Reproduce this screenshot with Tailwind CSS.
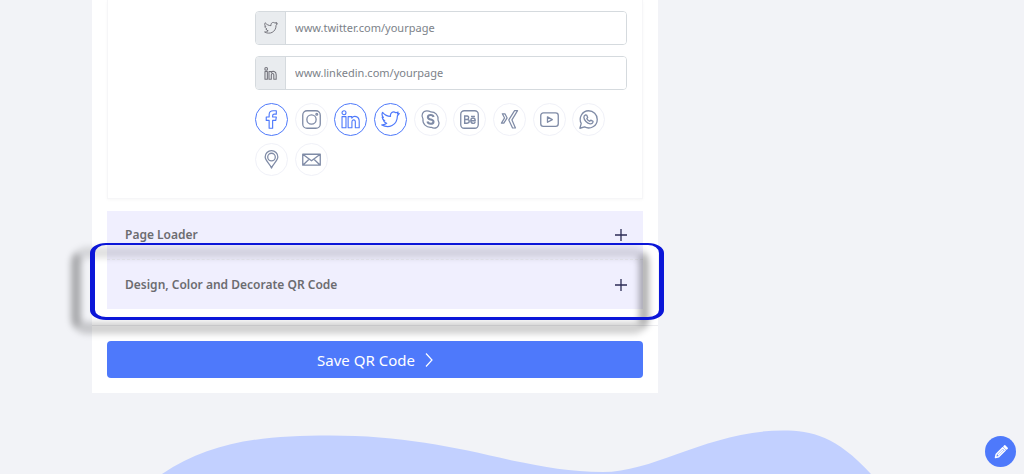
<!DOCTYPE html>
<html lang="en">
<head>
<meta charset="utf-8">
<meta name="viewport" content="width=device-width, initial-scale=1">
<title>QR Code</title>
<script src="https://cdn.jsdelivr.net/npm/@tailwindcss/browser@4"></script>
</head>
<body class="bg-white font-['Noto_Sans','Open_Sans',sans-serif] text-xs text-[#6c6c70]">
<div class="bg-[#f2f3f7]">
  <main class="ml-[92px] mr-[366px] bg-white">
    <form>
      <div class="px-[15px] pb-4">
        <section class="border border-t-0 border-[#f6f6f8] pt-[11px] pb-[22px] pl-[147px] pr-[15px] shadow-[0_1px_3px_rgba(0,0,0,0.03)]">
          <div class="flex flex-col gap-[11px] text-[11px]">
            <div class="flex h-[34px] overflow-hidden rounded border border-[#d5dade]">
              <label for="twitter" aria-label="Twitter" class="flex w-[30px] shrink-0 items-center justify-center border-r border-[#d5dade] bg-[#e9ecef] text-[#74747c]">
                <svg class="size-3.5" viewBox="0 0 24 24" fill="none" stroke="currentColor" stroke-width="1.700" stroke-linejoin="round"><path d="M23 4.500l-2.300.5.900-2.500-2.900 1C15 .8 11.300 3.600 12 8 8 8 4.500 6 2 3c-1.300 2.500-.8 4.500 1 6.300L1.500 9c.2 2 1.300 3.600 3.200 4.500l-1.400.2c.7 1.700 2 2.700 3.900 3.100C5.500 18.300 3.500 19 1 18.800c8.500 5 19.500.7 19.700-11.300z"/></svg>
              </label>
              <input id="twitter" type="text" placeholder="www.twitter.com/yourpage" class="min-w-0 flex-1 bg-white px-[9px] outline-none placeholder:text-[#7c8289]">
            </div>
            <div class="flex h-[34px] overflow-hidden rounded border border-[#d5dade]">
              <label for="linkedin" aria-label="LinkedIn" class="flex w-[30px] shrink-0 items-center justify-center border-r border-[#d5dade] bg-[#e9ecef] text-[#74747c]">
                <svg class="size-[13px]" viewBox="0 0 24 24" fill="none" stroke="currentColor" stroke-width="2" stroke-linejoin="round"><circle cx="4" cy="3.500" r="2.500"/><path d="M1.800 8.300h4.400v14.200H1.800zM9.200 8.300h4.200v1.900c2.400-3.500 9.100-2.700 9.100 4.100v8.200h-4.400v-7.600c0-3.800-4.600-3.600-4.600 0v7.600H9.200z"/></svg>
              </label>
              <input id="linkedin" type="text" placeholder="www.linkedin.com/yourpage" class="min-w-0 flex-1 bg-white px-[9px] outline-none placeholder:text-[#7c8289]">
            </div>
          </div>

          <div class="mt-[13px] grid max-w-[357px] grid-cols-9 gap-y-[7px] text-[#7f8ba6]">
            <button type="button" aria-label="Facebook" class="flex size-[33px] items-center justify-center rounded-full border border-[#4e79fb] text-[#4e79fb]">
              <svg class="size-[21px]" viewBox="0 0 24 24" fill="none" stroke="currentColor" stroke-width="1.300" stroke-linejoin="round"><path d="M9.300 22v-9H6V9.200h3.300V6.500C9.300 3.400 11.100 2 14 2h3.500v3.900h-2.300c-1.400 0-1.900.6-1.900 1.700v1.600h4.200l-.6 3.800h-3.600v9z"/></svg>
            </button>
            <button type="button" aria-label="Instagram" class="flex size-[33px] items-center justify-center rounded-full border border-[#f0f1f8]">
              <svg class="size-[21px]" viewBox="0 0 24 24" fill="none" stroke="currentColor" stroke-width="1.500"><rect x="2" y="2" width="20" height="20" rx="5"/><circle cx="12" cy="12" r="5.300"/><circle cx="18" cy="6" r="1"/></svg>
            </button>
            <button type="button" aria-label="LinkedIn" class="flex size-[33px] items-center justify-center rounded-full border border-[#4e79fb] text-[#4e79fb]">
              <svg class="size-[19px]" viewBox="0 0 24 24" fill="none" stroke="currentColor" stroke-width="1.400" stroke-linejoin="round"><circle cx="3.800" cy="3.500" r="2.500"/><path d="M1.300 8.300h5v14.200h-5zM9 8.300h4.600v1.900c2.400-3.500 9.400-2.700 9.400 4.100v8.200h-4.900v-7.600c0-3.300-4.300-3.100-4.300 0v7.600H9z"/></svg>
            </button>
            <button type="button" aria-label="Twitter" class="flex size-[33px] items-center justify-center rounded-full border border-[#4e79fb] text-[#4e79fb]">
              <svg class="size-[19px]" viewBox="0 0 24 24" fill="none" stroke="currentColor" stroke-width="1.500" stroke-linejoin="round"><path d="M23 4.500l-2.300.5.900-2.500-2.900 1C15 .8 11.300 3.600 12 8 8 8 4.500 6 2 3c-1.300 2.500-.8 4.500 1 6.300L1.500 9c.2 2 1.300 3.600 3.200 4.500l-1.400.2c.7 1.700 2 2.700 3.900 3.100C5.500 18.300 3.500 19 1 18.800c8.500 5 19.500.7 19.700-11.300z"/></svg>
            </button>
            <button type="button" aria-label="Skype" class="flex size-[33px] items-center justify-center rounded-full border border-[#f0f1f8]">
              <svg class="size-[21px]" viewBox="0 0 24 24" fill="none" stroke="currentColor" stroke-width="1.400" stroke-linejoin="round"><path d="M12 3.200c5.500-.2 9.400 4 8.600 9.500 2.500 3.900.4 9.200-4.500 9.200-1.200 0-2.200-.4-3.100-1C7.200 21.400 2.600 17 3.400 11.200.9 7.300 3 2.100 7.900 2.100c1.600 0 3 .4 4.100 1.100z"/><path d="M15.500 9.200C15 7.300 13.800 6.800 12 6.900c-3.600.2-4 3.600-.8 4.700 2.700.9 4.600 1 4.200 3.200-.5 2.900-6 2.900-6.900-.5" stroke-width="2.400"/></svg>
            </button>
            <button type="button" aria-label="Behance" class="flex size-[33px] items-center justify-center rounded-full border border-[#f0f1f8]">
              <svg class="size-[21px]" viewBox="0 0 24 24" fill="none" stroke="currentColor" stroke-width="1.500"><rect x="2" y="2" width="20" height="20" rx="4"/><path d="M6.500 8v8.200h2.800c3.200 0 3.100-4.200.2-4.200H6.500h2.800c2.300 0 2.300-4 0-4zM13.500 13.400h5c0-4.200-5-4.200-5 0 0 3.700 4.200 3.700 5 1.400M13.700 8.400h4.500" stroke-width="1.600"/></svg>
            </button>
            <button type="button" aria-label="Xing" class="flex size-[33px] items-center justify-center rounded-full border border-[#f0f1f8]">
              <svg class="size-[21px]" viewBox="0 0 24 24" fill="none" stroke="currentColor" stroke-width="1.400" stroke-linejoin="round"><path d="M3.800 5.500h3l2.500 4.700-3.800 6H2.800l3.600-6zM17.800 1.800h3.400L14.800 12.500l4 9.200h-3.300l-4.300-9.200z"/></svg>
            </button>
            <button type="button" aria-label="YouTube" class="flex size-[33px] items-center justify-center rounded-full border border-[#f0f1f8]">
              <svg class="size-[21px]" viewBox="0 0 24 24" fill="none" stroke="currentColor" stroke-width="1.500" stroke-linejoin="round"><rect x="2" y="4.500" width="20" height="15.400" rx="3"/><path d="M9.700 9v6.200l5.500-3.100z"/></svg>
            </button>
            <button type="button" aria-label="WhatsApp" class="flex size-[33px] items-center justify-center rounded-full border border-[#f0f1f8]">
              <svg class="size-[21px]" viewBox="0 0 24 24" fill="none" stroke="currentColor" stroke-width="1.500" stroke-linejoin="round"><path d="M2.200 22l1.500-5.500C.2 10 5 2 12 2c5.500 0 10 4.400 10 9.900 0 7.400-8 12-14.500 8.600z"/><path d="M8.500 6.800l1.400.1 1.200 2.700-1 1.500c.8 1.500 1.900 2.400 3.200 2.900l1.300-1.200 2.600 1.300c.2 1.800-1.500 3-3.300 2.800-3.500-.5-7-4.100-7.200-7.300 0-1.200.6-2.300 1.800-2.800z"/></svg>
            </button>
            <button type="button" aria-label="Location" class="flex size-[33px] items-center justify-center rounded-full border border-[#f0f1f8]">
              <svg class="size-[19px]" viewBox="0 0 24 24" fill="none" stroke="currentColor" stroke-width="1.600" stroke-linejoin="round"><path d="M12 22.800C10.500 18 4 13.500 4 8.900a8 8 0 0 1 16 0c0 4.600-6.500 9.100-8 13.900z"/><circle cx="12" cy="8.900" r="4.800"/></svg>
            </button>
            <button type="button" aria-label="Email" class="flex size-[33px] items-center justify-center rounded-full border border-[#f0f1f8]">
              <svg class="size-[21px]" viewBox="0 0 24 24" fill="none" stroke="currentColor" stroke-width="1.500" stroke-linejoin="round"><path d="M2 6h20v12.500H2zM2 6l10 7.500L22 6M2 18.500l7.500-7M22 18.500l-7.500-7"/></svg>
            </button>
          </div>
        </section>

        <button type="button" class="mt-3 flex h-[49px] w-full items-center justify-between border-b border-dashed border-[#e8e8f0] bg-[#f0effe] pl-[18px] pr-4 text-left font-semibold">
          <span>Page Loader</span>
          <svg class="size-3" viewBox="0 0 12 12" fill="none" stroke="#2b2b55" stroke-width="1.300"><path d="M6 0v12M0 6h12"/></svg>
        </button>
        <div class="relative">
          <button type="button" class="flex h-[49px] w-full items-center justify-between bg-[#f0effe] pl-[18px] pr-4 text-left font-semibold">
            <span>Design, Color and Decorate QR Code</span>
            <svg class="size-3" viewBox="0 0 12 12" fill="none" stroke="#2b2b55" stroke-width="1.300"><path d="M6 0v12M0 6h12"/></svg>
          </button>
          <!-- Highlight frame and its cast shadow -->
          <div class="pointer-events-none absolute -top-[13px] -bottom-[25px] -left-9 -right-1.5 rounded-[16px] border-x-[10px] border-t-[11px] border-b-[12px] border-x-black/30 border-t-black/12 border-b-black/18 blur-[3px]"></div>
          <div class="pointer-events-none absolute -top-[17px] -bottom-[11px] -left-[17px] -right-[21px] rounded-[16px/10px] border-x-[5px] border-t-2 border-b-3 border-[#0b16d8]"></div>
        </div>
      </div>
      <div class="border-t border-[#ececef] px-[15px] pt-[15px] pb-[15px]">
        <button type="submit" class="flex h-[37px] w-full items-center justify-center gap-2.5 rounded bg-[#4e79fb] text-[15px] text-white">
          <span>Save QR Code</span>
          <svg class="h-3.5 w-2" viewBox="0 0 8 14" fill="none" stroke="currentColor" stroke-width="1.200"><path d="M1 .5l6 6.500-6 6.500"/></svg>
        </button>
      </div>
    </form>
  </main>
  <svg class="mt-[37px] block h-11 w-full" viewBox="0 0 1024 44" preserveAspectRatio="none" fill="#c2d0ff"><path d="M162 44C210 12 260 5.500 330 5.500C400 5.500 455 17 512 30.500C545 37 570 42 603 42C655 42 710 .5 783 .5C812 .5 836 6 871 44z"/></svg>
</div>
<button type="button" aria-label="Edit" class="fixed right-2 bottom-[9px] flex size-[31px] items-center justify-center rounded-full bg-[#4e79fb] text-white">
  <svg class="size-3.5" viewBox="0 0 14 14" fill="none" stroke="currentColor" stroke-width="1.500" stroke-linejoin="round"><path d="M1.500 12.500l.7-3.200 6.500-6.500 2.500 2.500-6.500 6.500zM3.800 10.200l5.400-5.400"/><path d="M10 1.500l.8-.7 2.400 2.400-.7.800z" fill="currentColor"/></svg>
</button>
</body>
</html>
